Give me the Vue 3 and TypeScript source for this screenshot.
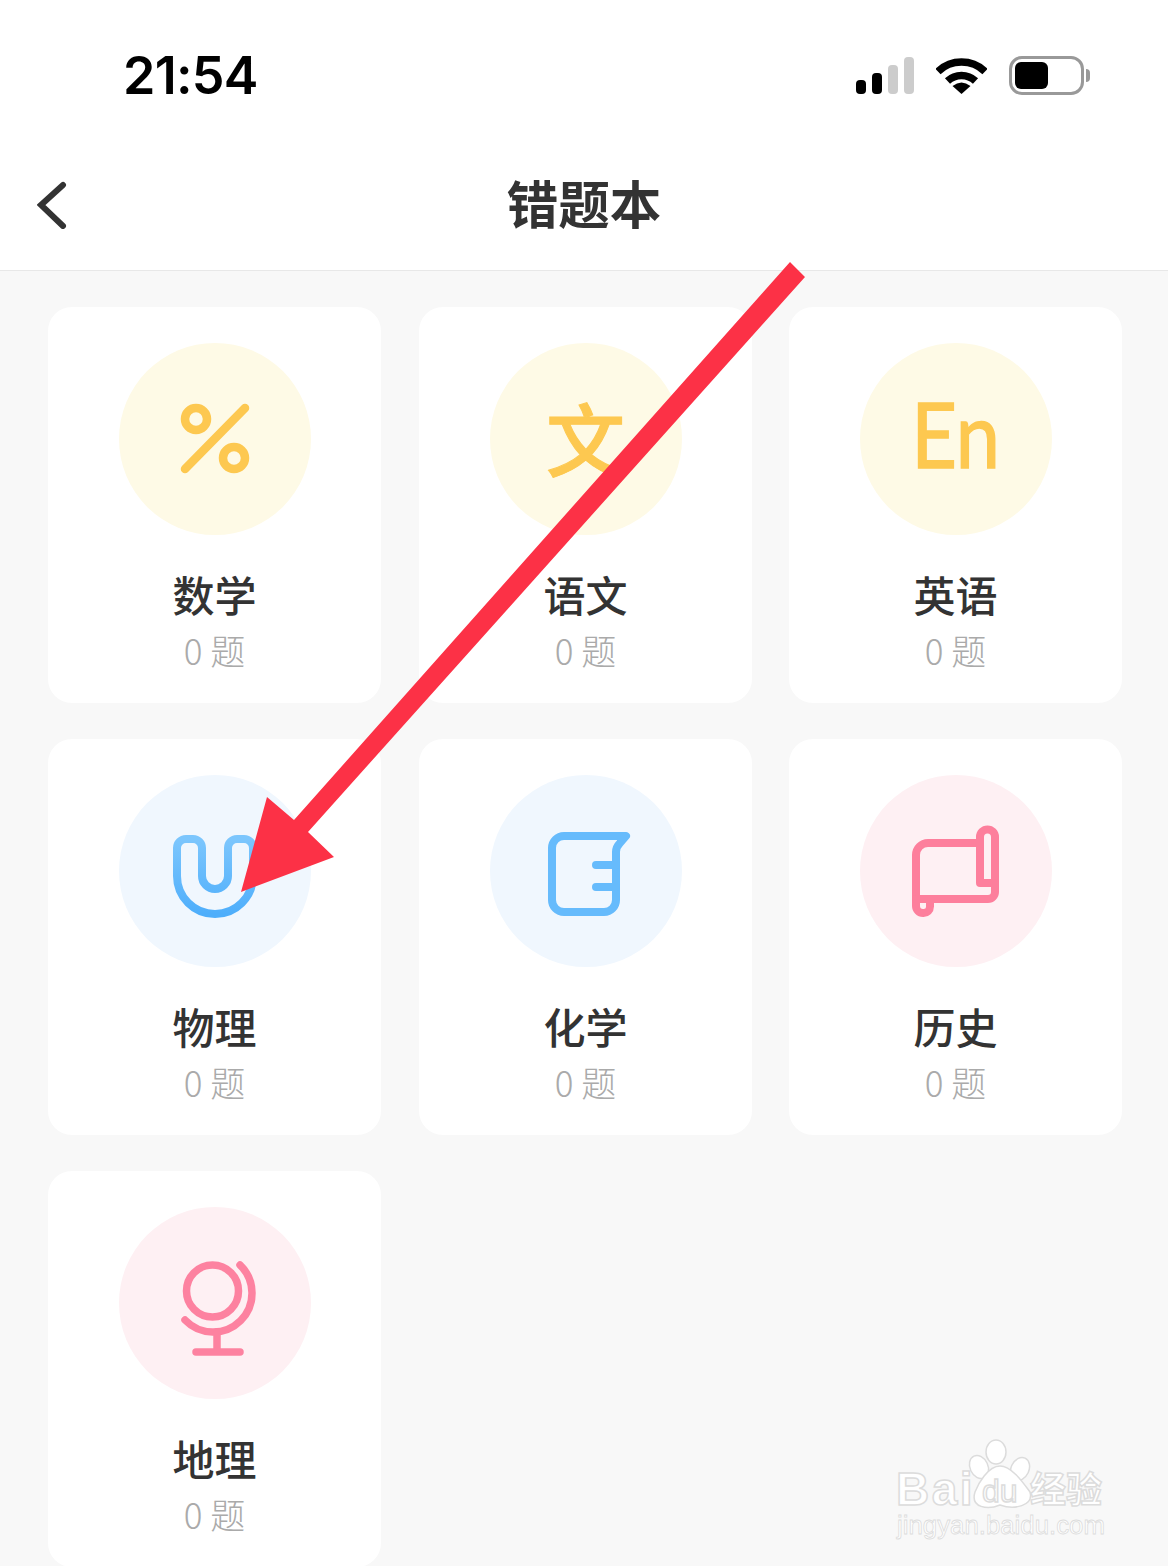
<script setup lang="ts">
interface Subject {
  name: string;
  tone: "yellow" | "blue" | "pink";
  icon: string;
}

const subjects: Subject[] = [
  { name: "数学", tone: "yellow", icon: "percent" },
  { name: "语文", tone: "yellow", icon: "wen" },
  { name: "英语", tone: "yellow", icon: "en" },
  { name: "物理", tone: "blue", icon: "magnet" },
  { name: "化学", tone: "blue", icon: "beaker" },
  { name: "历史", tone: "pink", icon: "scroll" },
  { name: "地理", tone: "pink", icon: "globe" },
];
</script>

<template>
  <div class="page">
    <header class="top">
      <div class="status">
        <span class="time">21:54</span>
        <div class="indicators">
          <div class="signal">
            <i class="on h1"></i>
            <i class="on h2"></i>
            <i class="h3"></i>
            <i class="h4"></i>
          </div>
          <svg class="wifi" width="51" height="38" viewBox="0 0 51 38">
            <path d="M2 15.5 A34 34 0 0 1 49 15.5" fill="none" stroke="#000" stroke-width="7.5" />
            <path d="M11.5 25 A20.5 20.5 0 0 1 39.5 25" fill="none" stroke="#000" stroke-width="7.5" />
            <path d="M16.5 30 Q25.5 23 34.5 30 L25.5 38 Z" fill="#000" />
          </svg>
          <div class="battery">
            <div class="battery-body"><div class="battery-fill"></div></div>
            <div class="battery-nub"></div>
          </div>
        </div>
      </div>
      <div class="nav">
        <svg class="back" width="30" height="48" viewBox="0 0 30 48">
          <path d="M26 4 L4 24 L26 45" fill="none" stroke="#333" stroke-width="6" stroke-linecap="round" stroke-linejoin="miter" />
        </svg>
        <h1>错题本</h1>
      </div>
    </header>

    <main class="grid">
      <section v-for="s in subjects" :key="s.name" class="card">
        <div class="circle" :class="s.tone">
          <svg v-if="s.icon === 'percent'" class="glyph" viewBox="119 343 192 192">
            <g fill="none" stroke="#fdc850" stroke-linecap="round">
              <circle cx="196" cy="419" r="11" stroke-width="8.5" />
              <circle cx="234" cy="458" r="11" stroke-width="8.5" />
              <path d="M245 408 L185 469" stroke-width="8.5" />
            </g>
          </svg>
          <span v-else-if="s.icon === 'wen'" class="wen">文</span>
          <span v-else-if="s.icon === 'en'" class="en">En</span>
          <svg v-else-if="s.icon === 'magnet'" class="glyph" viewBox="119 775 192 192">
            <defs>
              <linearGradient id="blue" x1="0" y1="0" x2="0" y2="1">
                <stop offset="0" stop-color="#7cc6fd" />
                <stop offset="1" stop-color="#4eaefb" />
              </linearGradient>
            </defs>
            <path
              d="M202 876 V848 a9 9 0 0 0 -9 -9 H186 a9 9 0 0 0 -9 9 V876 A38 38 0 0 0 253 876 V848 a9 9 0 0 0 -9 -9 h-7 a9 9 0 0 0 -9 9 V876 A13 13 0 0 1 202 876 Z"
              fill="none"
              stroke="url(#blue)"
              stroke-width="8"
            />
          </svg>
          <svg v-else-if="s.icon === 'beaker'" class="glyph" viewBox="490 775 192 192">
            <g fill="none" stroke="#66bbfc" stroke-width="8" stroke-linecap="round" stroke-linejoin="round">
              <path d="M626 836 H564 a12 12 0 0 0 -12 12 V900 a12 12 0 0 0 12 12 H604 a12 12 0 0 0 12 -12 V852 q0 -5 4 -9 Z" />
              <path d="M596 865 H616 M596 887 H616" />
            </g>
          </svg>
          <svg v-else-if="s.icon === 'scroll'" class="glyph" viewBox="860 775 192 192">
            <g fill="none" stroke="#fd7f9c" stroke-width="8" stroke-linecap="round" stroke-linejoin="round">
              <path d="M980 843 H928 a12 12 0 0 0 -12 12 V906 a7 7 0 0 0 7 7 h0.5 a6.5 6.5 0 0 0 6.5 -6.5 V899" />
              <path d="M980 883 H995 V837 a7.5 7.5 0 0 0 -15 0 V883" />
              <path d="M995 883 V892 a7 7 0 0 1 -7 7 H916" />
            </g>
          </svg>
          <svg v-else-if="s.icon === 'globe'" class="glyph" viewBox="119 1207 192 192">
            <g fill="none" stroke="#fd82a0" stroke-width="7.5" stroke-linecap="round">
              <circle cx="212.5" cy="1291" r="26" />
              <path d="M240 1265 A38.9 38.9 0 1 1 185 1320" />
              <path d="M217 1332 V1352 M196 1352 H240" />
            </g>
          </svg>
        </div>
        <div class="name">{{ s.name }}</div>
        <div class="count">0 题</div>
      </section>
    </main>

    <!-- arrow drawn over the screenshot -->
    <svg class="arrow" width="1168" height="1566" viewBox="0 0 1168 1566">
      <path d="M790 262 L805 277 L308 832 L334 857 L241 892 L267 797 L294 820 Z" fill="#fc3146" />
    </svg>

    <svg class="watermark" width="230" height="130" viewBox="880 1430 230 130">
      <g fill="#fff" stroke="#dcdcdc" stroke-width="1.5">
        <ellipse cx="979" cy="1467" rx="9" ry="12" transform="rotate(-25 979 1467)" />
        <ellipse cx="996" cy="1452" rx="10" ry="12" />
        <ellipse cx="1020" cy="1469" rx="9" ry="12" transform="rotate(25 1020 1469)" />
        <path d="M1000 1466 C1012 1466 1024 1484 1030 1492 C1034 1506 1014 1510 1000 1505 C988 1510 970 1508 975 1492 C978 1484 988 1466 1000 1466 Z" />
        <text x="896" y="1505" class="wm-bai">Bai</text>
        <text x="982" y="1502" class="wm-du">du</text>
        <text x="1030" y="1503" class="wm-cn">经验</text>
        <text x="897" y="1534" class="wm-url">jingyan.baidu.com</text>
      </g>
    </svg>
  </div>
</template>

<style scoped>
.page {
  position: relative;
  width: 1168px;
  height: 1566px;
  overflow: hidden;
  background: #f8f8f8;
  font-family: "Noto Sans CJK SC", "Noto Sans", sans-serif;
}

.top {
  background: #fff;
  border-bottom: 1px solid #e8e8e8;
  height: 271px;
  box-sizing: border-box;
}

.status {
  height: 141px;
  display: flex;
  justify-content: space-between;
  align-items: flex-start;
  padding: 0 78px 0 123px;
}

.time {
  margin-top: 44px;
  font-family: Inter, sans-serif;
  font-size: 52px;
  line-height: 63px;
  font-weight: 600;
  color: #000;
  letter-spacing: -0.7px;
}

.indicators {
  display: flex;
  align-items: flex-start;
  margin-top: 56px;
}

.signal {
  display: flex;
  align-items: flex-end;
  gap: 6px;
  height: 38px;
  margin-right: 22px;
}

.signal i {
  display: block;
  width: 10px;
  border-radius: 4px;
  background: #ccc;
}

.signal i.on {
  background: #000;
}

.h1 { height: 14px; }
.h2 { height: 21px; }
.h3 { height: 29px; }
.h4 { height: 37px; }

.wifi {
  margin-right: 22px;
}

.battery {
  display: flex;
  align-items: center;
  height: 39px;
}

.battery-body {
  width: 75px;
  height: 39px;
  box-sizing: border-box;
  border: 3px solid #999;
  border-radius: 13px;
  padding: 3px;
}

.battery-fill {
  width: 33px;
  height: 27px;
  background: #000;
  border-radius: 6px;
}

.battery-nub {
  width: 4px;
  height: 13px;
  margin-left: 2px;
  background: #999;
  border-radius: 0 6px 6px 0;
}

.nav {
  position: relative;
  height: 128px;
  display: flex;
  align-items: flex-start;
  justify-content: center;
}

.nav h1 {
  margin: 26px 0 0;
  font-size: 51.5px;
  line-height: 70px;
  font-weight: 700;
  color: #333;
}

.back {
  position: absolute;
  left: 37px;
  top: 40px;
}

.grid {
  display: grid;
  grid-template-columns: 371px 370px 333px;
  grid-auto-rows: 396px;
  row-gap: 36px;
  padding: 36px 0 0 48px;
}

.card {
  width: 333px;
  background: #fff;
  border-radius: 24px;
  display: flex;
  flex-direction: column;
  align-items: center;
  padding-top: 36px;
  box-sizing: border-box;
}

.circle {
  width: 192px;
  height: 192px;
  border-radius: 50%;
  display: flex;
  align-items: center;
  justify-content: center;
}

.circle.yellow { background: #fefae6; }
.circle.blue { background: #f0f7fe; }
.circle.pink { background: #fef0f3; }

.glyph {
  width: 192px;
  height: 192px;
  display: block;
}

.wen {
  margin-bottom: 5px;
  font-size: 79px;
  line-height: 79px;
  font-weight: 500;
  color: #fdc850;
  -webkit-text-stroke: 1px #fdc850;
}

.en {
  margin-bottom: 12px;
  font-family: Lato, sans-serif;
  font-size: 92px;
  line-height: 92px;
  font-weight: 400;
  color: #fdc850;
  -webkit-text-stroke: 1.5px #fdc850;
  transform: scaleX(0.86);
}

.name {
  margin-top: 30px;
  font-size: 42px;
  line-height: 58px;
  font-weight: 500;
  color: #333;
}

.count {
  margin-top: 2px;
  font-size: 35px;
  line-height: 50px;
  font-weight: 300;
  color: #aaa;
}

.arrow,
.watermark {
  position: absolute;
  pointer-events: none;
}

.arrow {
  left: 0;
  top: 0;
}

.watermark {
  left: 880px;
  top: 1430px;
}

.wm-bai {
  font-family: "Liberation Sans", sans-serif;
  font-size: 46px;
  font-weight: 700;
  letter-spacing: 2.5px;
}

.wm-du {
  font-family: "Liberation Sans", sans-serif;
  font-size: 32px;
  font-weight: 400;
}

.wm-cn {
  font-family: "Noto Sans CJK SC", sans-serif;
  font-size: 36px;
  font-weight: 700;
}

.wm-url {
  font-family: "Liberation Sans", sans-serif;
  font-size: 25.8px;
  stroke-width: 0.8px;
}
</style>

<style>
body {
  margin: 0;
  background: #f8f8f8;
}
</style>
